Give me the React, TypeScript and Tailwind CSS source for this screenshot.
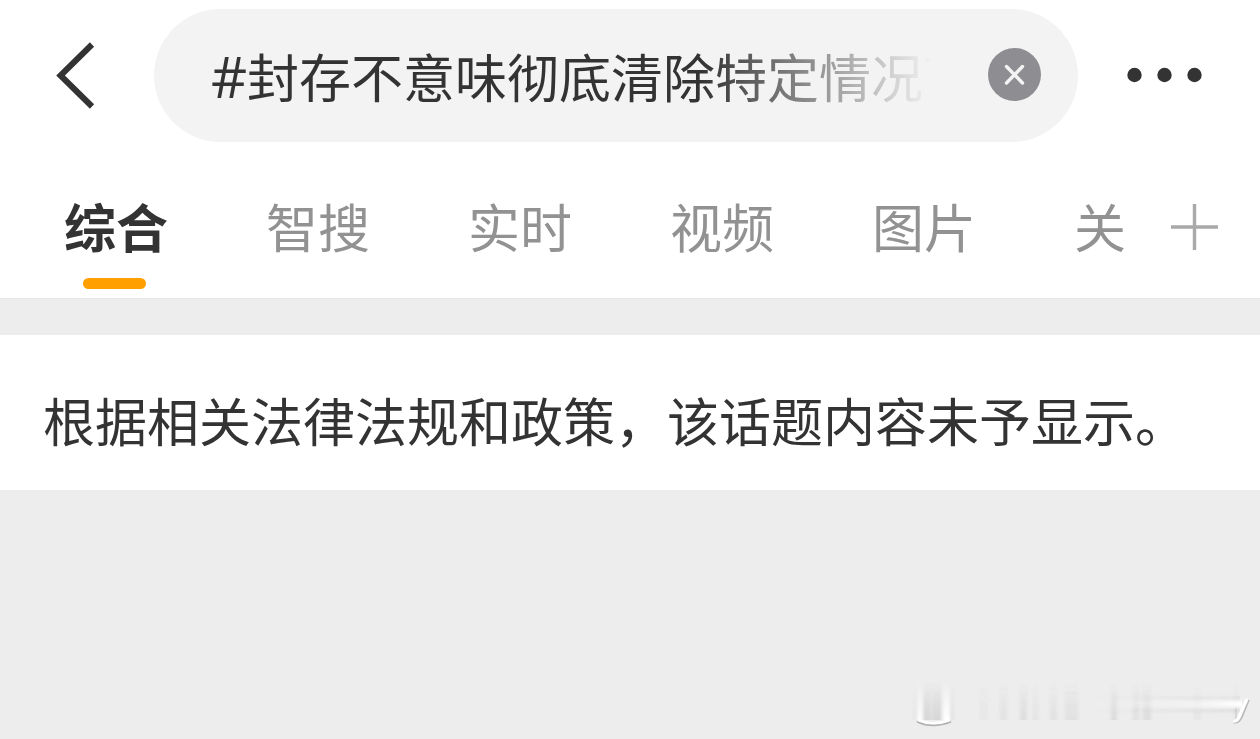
import { useState } from 'react';

const tabs = ['综合', '智搜', '实时', '视频', '图片', '关注'];

// soft vertical streaks of the watermark: [x, width, opacity]
const streaks = [
  [33, 8, 0.15],
  [42, 10, 0.15],
  [90, 7, 0.04],
  [110, 7, 0.07],
  [130, 7, 0.1],
  [143, 5, 0.06],
  [160, 7, 0.07],
  [175, 13, 0.08],
  [221, 6, 0.11],
  [243, 6, 0.08],
  [253, 8, 0.1],
  [304, 7, 0.03],
  [344, 4, 0.05],
];

function BackIcon() {
  return (
    <svg width="44" height="72" viewBox="0 0 44 72" fill="none" stroke="#333333" strokeWidth="6">
      <path d="M40 4.5 L8.5 35.5 L40 66.5" />
    </svg>
  );
}

function ClearIcon() {
  return (
    <svg width="54" height="54" viewBox="0 0 54 54" fill="none">
      <circle cx="26.5" cy="26.5" r="26.5" fill="#8e8e92" />
      <path d="M18.5 18.5 L34.5 35 M34.5 18.5 L18.5 35" stroke="#f3f3f3" strokeWidth="3.4" strokeLinecap="round" />
    </svg>
  );
}

function MoreIcon() {
  return (
    <svg width="76" height="18" viewBox="0 0 76 18" fill="#333333">
      <circle cx="7.5" cy="8" r="7.2" />
      <circle cx="37.5" cy="8" r="7.2" />
      <circle cx="67.5" cy="8" r="7.2" />
    </svg>
  );
}

function Watermark() {
  return (
    <svg width="370" height="79" viewBox="0 0 370 79" fill="none">
      <defs>
        <linearGradient id="fadeDown" x1="0" y1="0" x2="0" y2="1">
          <stop offset="0" stopColor="#555" stopOpacity="0" />
          <stop offset="0.6" stopColor="#555" stopOpacity="0.7" />
          <stop offset="1" stopColor="#555" />
        </linearGradient>
        <linearGradient id="shineDown" x1="0" y1="0" x2="0" y2="1">
          <stop offset="0" stopColor="#fff" stopOpacity="0" />
          <stop offset="1" stopColor="#fff" />
        </linearGradient>
        <linearGradient id="shineRight" x1="0" y1="0" x2="1" y2="0">
          <stop offset="0" stopColor="#fff" stopOpacity="0" />
          <stop offset="0.7" stopColor="#fff" stopOpacity="0.35" />
          <stop offset="1" stopColor="#fff" />
        </linearGradient>
        <linearGradient id="edgeRight" x1="0" y1="0" x2="1" y2="0">
          <stop offset="0" stopColor="#777" stopOpacity="0" />
          <stop offset="1" stopColor="#777" stopOpacity="0.14" />
        </linearGradient>
        <filter id="soften">
          <feGaussianBlur stdDeviation="1.6 0.3" />
        </filter>
        <filter id="soft">
          <feGaussianBlur stdDeviation="0.5" />
        </filter>
        <filter id="softer">
          <feGaussianBlur stdDeviation="0.5 1.4" />
        </filter>
      </defs>
      <g filter="url(#soften)">
        {streaks.map(([x, width, opacity]) => (
          <rect key={x} x={x} y="22" width={width} height="38" fill="url(#fadeDown)" opacity={opacity} />
        ))}
        <rect x="28" y="22" width="4" height="38" fill="url(#shineDown)" />
        <rect x="53" y="22" width="7" height="38" fill="url(#shineDown)" />
        <rect x="60" y="24" width="3" height="36" fill="url(#fadeDown)" opacity="0.12" />
        <rect x="24" y="24" width="3" height="36" fill="url(#fadeDown)" opacity="0.05" />
      </g>
      <g filter="url(#softer)">
        <rect x="200" y="37" width="150" height="2" fill="url(#edgeRight)" />
        <rect x="200" y="49" width="150" height="3" fill="url(#edgeRight)" />
        <rect x="210" y="41" width="142" height="6" fill="url(#shineRight)" />
      </g>
      <g filter="url(#soft)">
        <path d="M27 61.5 Q43 69 61 61.5" stroke="#777" strokeOpacity="0.5" strokeWidth="2" />
        <path d="M28 60 Q43 66.5 60 60" stroke="#fff" strokeWidth="2.6" />
        <path d="M346 48 V59" stroke="#777" strokeOpacity="0.3" />
        <path d="M359 40 L352 57 Q349 64 343 62.5" stroke="#777" strokeOpacity="0.45" strokeWidth="1.6" />
        <path d="M357 39 L351 52 L349 57 Q347 62 343 61" stroke="#fff" strokeWidth="3" />
      </g>
    </svg>
  );
}

export default function App() {
  const [query, setQuery] = useState('#封存不意味彻底清除特定情况下');
  const [active, setActive] = useState(0);

  return (
    <div className="flex flex-col w-[1260px] h-[739px] overflow-hidden bg-[#ededed] text-[#333333] text-[52px] leading-[76px] font-['Noto_Sans_CJK_SC',sans-serif]">
      <header className="h-[299px] shrink-0 bg-white border-b border-[#e6e6e6]">
        <div className="flex items-center h-[142px] pt-[9px]">
          <button className="ml-[52px] mr-[58px]" aria-label="返回">
            <BackIcon />
          </button>
          <div className="flex items-center w-[924px] h-[133px] rounded-full bg-[#f3f3f3] pl-[57px] pr-[36px]">
            <div className="flex w-[720px] pt-px overflow-hidden whitespace-nowrap mask-[linear-gradient(to_right,black_490px,transparent_722px)]">
              {query.startsWith('#') && (
                <span className="w-[36px] shrink-0 font-['Open_Sans'] text-[56px] leading-[76px]">#</span>
              )}
              <span>{query.replace('#', '')}</span>
            </div>
            <button className="ml-auto mb-0.5" onClick={() => setQuery('')} aria-label="清除">
              <ClearIcon />
            </button>
          </div>
          <button className="ml-[49px]" aria-label="更多">
            <MoreIcon />
          </button>
        </div>

        <div className="flex pt-[46px] pl-[64px]">
          <nav className="flex w-[1064px] gap-[98px] overflow-hidden">
            {tabs.map((tab, i) => (
              <button
                key={tab}
                onClick={() => setActive(i)}
                className={`flex flex-col items-center shrink-0 w-[104px] h-[102px] whitespace-nowrap ${
                  i === active ? 'font-bold' : 'text-[#929292]'
                }`}
              >
                {tab}
                {i === active && <span className="mt-[14px] mr-[4px] w-[63px] h-[11px] rounded-full bg-[#ff9f00]" />}
              </button>
            ))}
          </nav>
          <button className="ml-[43px] mt-4 h-[47px]" aria-label="添加">
            <svg width="47" height="47" viewBox="0 0 47 47" stroke="#a9a9a9" strokeWidth="3.4">
              <path d="M0 23 H47 M23.5 0 V46" />
            </svg>
          </button>
        </div>
      </header>

      <main className="mt-9 h-[155px] shrink-0 bg-white pt-[47px] pl-[43px] whitespace-nowrap">
        根据相关法律法规和政策，该话题内容未予显示。
      </main>

      <footer className="mt-auto flex justify-end">
        <Watermark />
      </footer>
    </div>
  );
}
